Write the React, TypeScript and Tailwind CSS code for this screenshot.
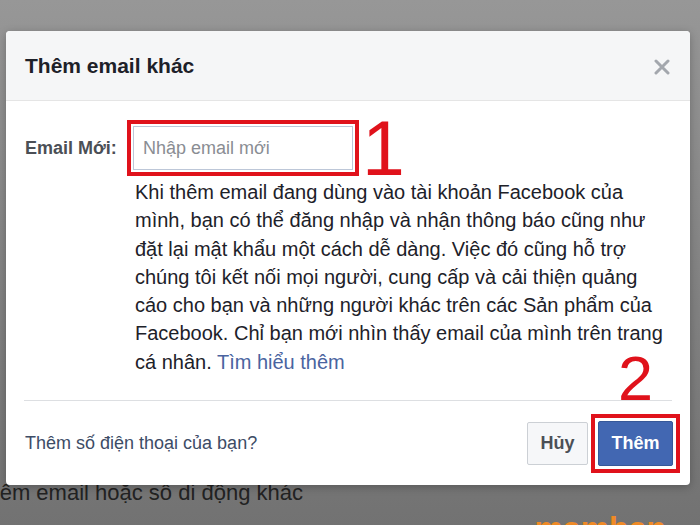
import React from 'react';

const font = { fontFamily: '"Liberation Sans", Arial, sans-serif' };

const lines = [
  'Khi thêm email đang dùng vào tài khoản Facebook của',
  'mình, bạn có thể đăng nhập và nhận thông báo cũng như',
  'đặt lại mật khẩu một cách dễ dàng. Việc đó cũng hỗ trợ',
  'chúng tôi kết nối mọi người, cung cấp và cải thiện quảng',
  'cáo cho bạn và những người khác trên các Sản phẩm của',
  'Facebook. Chỉ bạn mới nhìn thấy email của mình trên trang',
];

const App: React.FC = () => {
  return (
    <div
      style={font}
      className="relative w-[700px] h-[525px] overflow-hidden bg-linear-to-b from-[#979797] to-[#727272]"
    >
      {/* page behind the dialog */}
      <div className="pt-[479px]">
        <div className="-ml-[26px] text-[22px] leading-[28px] text-[#222] whitespace-nowrap">
          Thêm email hoặc số di động khác
        </div>
        <div className="flex justify-end items-baseline mt-[5px] pr-[2px] leading-none whitespace-nowrap">
          <span className="text-[32px] font-bold text-[#f08a24]">mamban</span>
          <span className="text-[18px] font-bold text-[#f08a24]">.net</span>
        </div>
      </div>

      {/* dialog */}
      <div className="absolute left-[6px] top-[31px] w-[684px] h-[454px] bg-white rounded-[4px] shadow-[0_2px_8px_rgba(0,0,0,0.25)] overflow-hidden">
        <div className="h-[70px] bg-[#f5f6f7] border-b border-[#e5e5e5] flex items-center justify-between pl-[19px] pr-[20px]">
          <h1 className="text-[21px] font-bold text-[#1d2129]">Thêm email khác</h1>
          <svg width="16" height="16" viewBox="0 0 16 16" className="mt-[2px]">
            <path d="M2 2L14 14M14 2L2 14" stroke="#a3a7ad" strokeWidth="3" strokeLinecap="round" />
          </svg>
        </div>

        <div className="pl-[19px] pt-[19px]">
          <div className="flex items-center h-[56px]">
            <label className="w-[102px] text-[18px] font-bold text-[#4b4f56]">Email Mới:</label>
            <div className="w-[232px] h-[56px] border-4 border-[#e0121b] p-[2px]">
              <div className="h-full border border-[#bdc7d8] bg-white flex items-center pl-[9px] text-[18px] text-[#8a8d93]">
                Nhập email mới
              </div>
            </div>
            <span className="ml-[3px] text-[77px] leading-[56px] text-[#e0121b]">1</span>
          </div>

          <p className="ml-[110px] mt-[2px] text-[20px] leading-[28.3px] text-[#1d2129] whitespace-nowrap">
            {lines.map((l) => (
              <React.Fragment key={l}>
                {l}
                <br />
              </React.Fragment>
            ))}
            cá nhân. <span className="text-[#4a64a0]">Tìm hiểu thêm</span>
          </p>
        </div>

        <div className="mx-[18px] mt-[24px] border-t border-[#dddfe2]" />

        <div className="flex items-center justify-between pl-[19px] pr-[10px] pt-[13px]">
          <span className="text-[18px] text-[#3d4c66]">Thêm số điện thoại của bạn?</span>
          <div className="flex items-center">
            <button className="w-[61px] h-[43px] bg-[#f6f7f9] border border-[#ccd0d5] rounded-[2px] text-[18px] font-bold text-[#4b4f56]">
              Hủy
            </button>
            <div className="ml-[3px] w-[89px] h-[59px] border-4 border-[#e0121b] p-[3px]">
              <button className="w-full h-full bg-[#4267b2] border border-[#365899] rounded-[2px] text-[18px] font-bold text-white">
                Thêm
              </button>
            </div>
          </div>
        </div>

        <span className="absolute left-[612px] top-[316px] text-[63px] leading-none text-[#e0121b]">2</span>
      </div>
    </div>
  );
};

export default App;
